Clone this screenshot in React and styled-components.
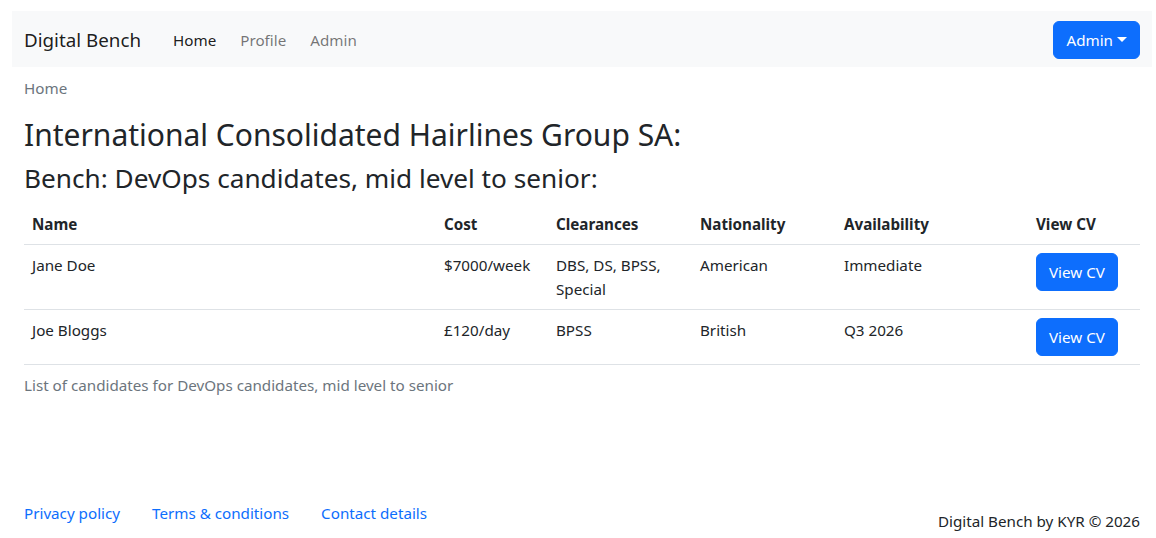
import styled, { createGlobalStyle } from "styled-components";

const GlobalStyle = createGlobalStyle`
  html, body {
    margin: 0;
    padding: 0;
  }
  body {
    font-family: "Noto Sans", "Open Sans", sans-serif;
    font-size: 15.2px;
    line-height: 24px;
    color: #212529;
    background: #ffffff;
  }
  * {
    box-sizing: border-box;
  }
`;

// 전체 페이지 틀
const Page = styled.div`
  min-height: 100vh;
  display: flex;
  flex-direction: column;
  padding: 11px 4px 5px 12px;
`;

// 상단 내비게이션 바
const Navbar = styled.nav`
  height: 56px;
  display: flex;
  align-items: center;
  padding: 1px 12px 0 12px;
  background-color: #f8f9fa;
`;

const Brand = styled.a`
  font-size: 18.8px;
  line-height: 30px;
  color: rgba(0, 0, 0, 0.9);
  text-decoration: none;
  margin-right: 20px;
`;

const NavList = styled.div`
  display: flex;
  flex: 1;
`;

const NavLink = styled.a`
  padding: 8px 12px;
  color: ${(p) => (p.$active ? "rgba(0, 0, 0, 0.9)" : "rgba(0, 0, 0, 0.55)")};
  text-decoration: none;
`;

const Button = styled.button`
  font-family: inherit;
  font-size: 15.2px;
  line-height: 24px;
  padding: 6px 12px;
  color: #ffffff;
  background-color: #0d6efd;
  border: 1px solid #0d6efd;
  border-radius: 6px;
  cursor: pointer;
`;

const Caret = styled.span`
  display: inline-block;
  margin-left: 4px;
  vertical-align: 4px;
  border-top: 5px solid #ffffff;
  border-left: 5px solid transparent;
  border-right: 5px solid transparent;
`;

const Main = styled.main`
  padding: 9px 12px 0 12px;
`;

const Breadcrumb = styled.div`
  color: #6c757d;
  margin-bottom: 16px;
`;

const Title = styled.h2`
  font-size: 30px;
  font-weight: 400;
  line-height: 38px;
  margin: 0 0 8px 0;
`;

const SubTitle = styled.h3`
  font-size: 26.2px;
  font-weight: 400;
  line-height: 33px;
  margin: 0 0 9px 0;
`;

// 후보자 테이블
const Table = styled.table`
  width: 100%;
  table-layout: fixed;
  border-collapse: collapse;
  caption-side: bottom;

  th {
    text-align: left;
    font-weight: 700;
  }

  th,
  td {
    padding: 8px;
    vertical-align: top;
    border-bottom: 1px solid #dee2e6;
  }
`;

const Caption = styled.caption`
  text-align: left;
  padding-top: 8px;
  color: #6c757d;
`;

const Footer = styled.footer`
  margin-top: auto;
  display: flex;
  align-items: flex-end;
  justify-content: space-between;
  padding: 0 12px;
`;

const FooterLinks = styled.div`
  display: flex;
  gap: 32px;
  padding-bottom: 8px;
`;

const FooterLink = styled.a`
  color: #0d6efd;
  text-decoration: none;
`;

const Copy = styled.div`
  color: #212529;
`;

const candidates = [
  {
    name: "Jane Doe",
    cost: "$7000/week",
    clearances: "DBS, DS, BPSS, Special",
    nationality: "American",
    availability: "Immediate",
  },
  {
    name: "Joe Bloggs",
    cost: "£120/day",
    clearances: "BPSS",
    nationality: "British",
    availability: "Q3 2026",
  },
];

export default function App() {
  return (
    <>
      <GlobalStyle />
      <Page>
        <Navbar>
          <Brand href="#">Digital Bench</Brand>
          <NavList>
            <NavLink href="#" $active>
              Home
            </NavLink>
            <NavLink href="#">Profile</NavLink>
            <NavLink href="#">Admin</NavLink>
          </NavList>
          <Button>
            Admin
            <Caret />
          </Button>
        </Navbar>
        <Main>
          <Breadcrumb>Home</Breadcrumb>
          <Title>International Consolidated Hairlines Group SA:</Title>
          <SubTitle>Bench: DevOps candidates, mid level to senior:</SubTitle>
          <Table>
            <colgroup>
              <col style={{ width: 412 }} />
              <col style={{ width: 112 }} />
              <col style={{ width: 144 }} />
              <col style={{ width: 144 }} />
              <col style={{ width: 192 }} />
              <col style={{ width: 112 }} />
            </colgroup>
            <Caption>List of candidates for DevOps candidates, mid level to senior</Caption>
            <thead>
              <tr>
                <th>Name</th>
                <th>Cost</th>
                <th>Clearances</th>
                <th>Nationality</th>
                <th>Availability</th>
                <th>View CV</th>
              </tr>
            </thead>
            <tbody>
              {candidates.map((c) => (
                <tr key={c.name}>
                  <td>{c.name}</td>
                  <td>{c.cost}</td>
                  <td>{c.clearances}</td>
                  <td>{c.nationality}</td>
                  <td>{c.availability}</td>
                  <td>
                    <Button>View CV</Button>
                  </td>
                </tr>
              ))}
            </tbody>
          </Table>
        </Main>
        <Footer>
          <FooterLinks>
            <FooterLink href="#">Privacy policy</FooterLink>
            <FooterLink href="#">Terms &amp; conditions</FooterLink>
            <FooterLink href="#">Contact details</FooterLink>
          </FooterLinks>
          <Copy>Digital Bench by KYR © 2026</Copy>
        </Footer>
      </Page>
    </>
  );
}
